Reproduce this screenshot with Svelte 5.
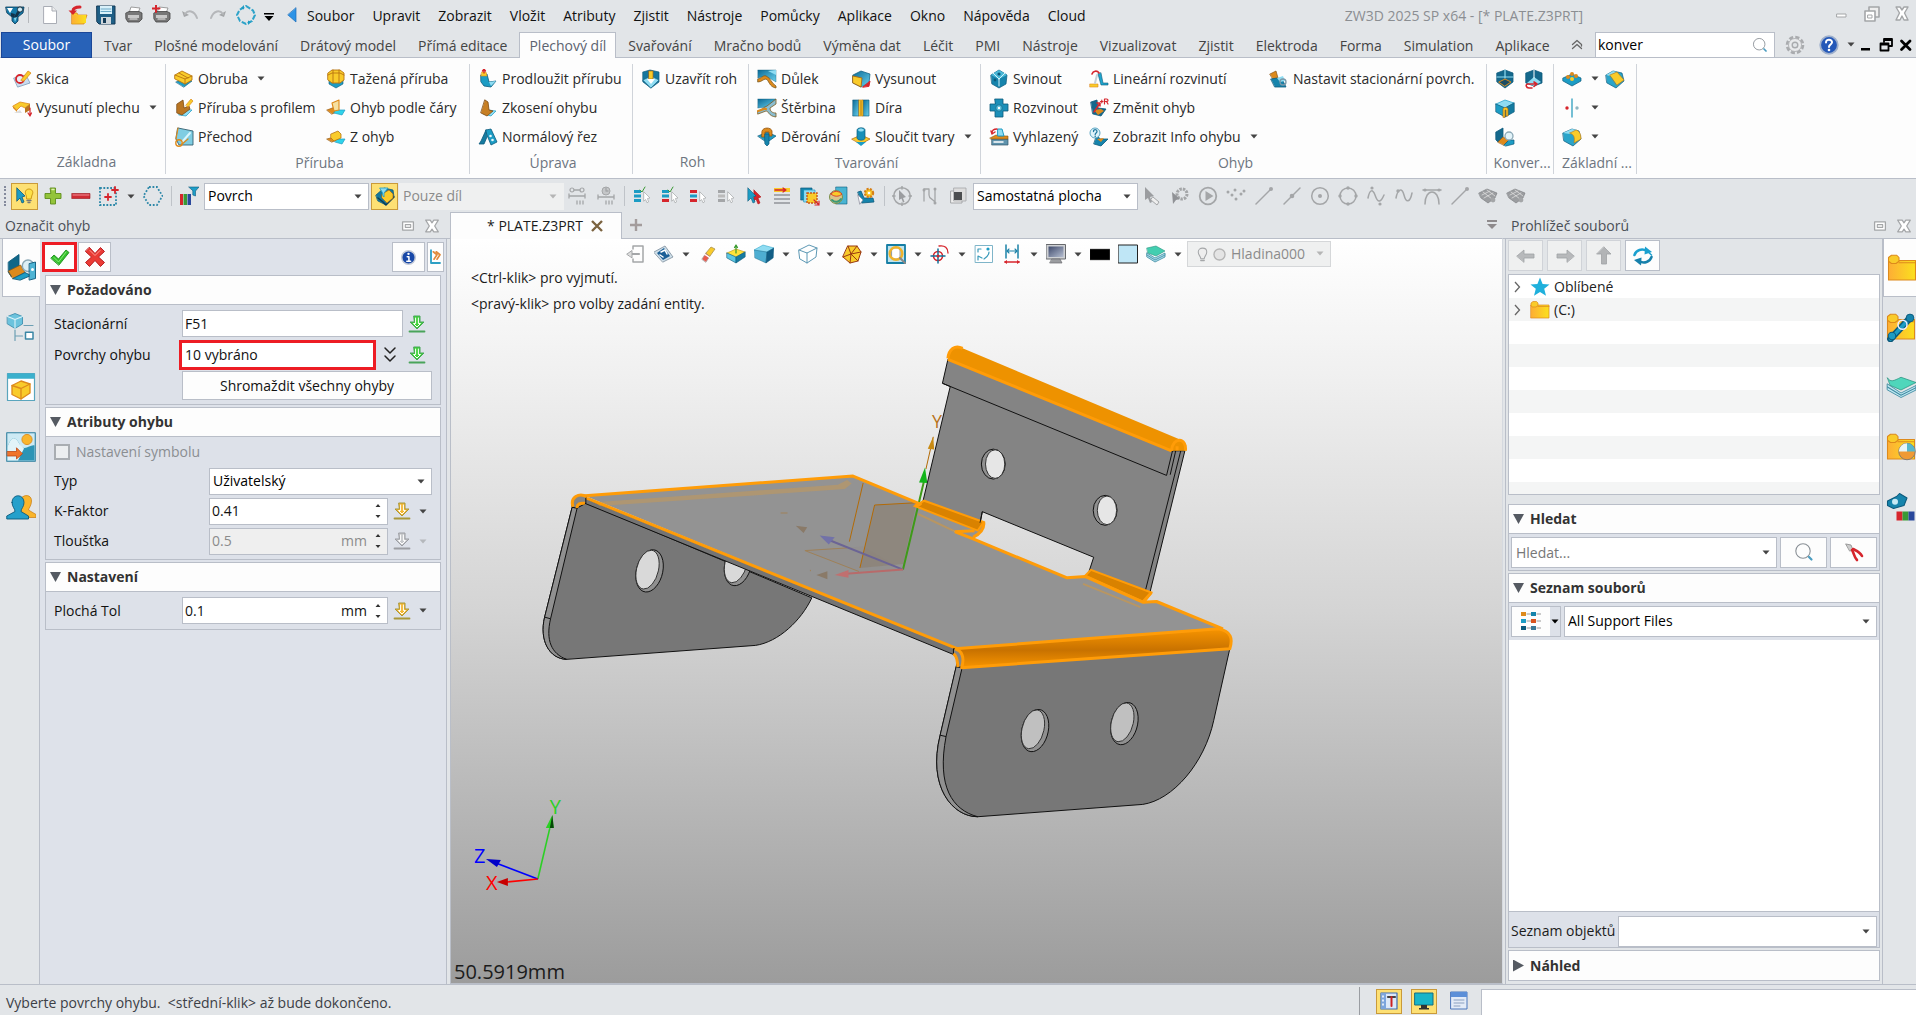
<script>
  const B = '#1c9cc4', D = '#0c5a7c', L = '#8fdcf2', Y = '#f9cb2a', O = '#dd8a1c', G = '#a4a6a8', R = '#d6252c';
  const p = (d, f = 'none', s = 'none', w = 1) =>
    `<path d="${d}" fill="${f}" stroke="${s}" stroke-width="${w}" stroke-linejoin="round" stroke-linecap="round"/>`;
  const c = (x, y, r, f = 'none', s = 'none', w = 1) =>
    `<circle cx="${x}" cy="${y}" r="${r}" fill="${f}" stroke="${s}" stroke-width="${w}"/>`;
  const cursor = (f, s) => p('M12 6L18 12L15.5 12.5L16.5 16L15 16.8L13.6 13.5L12 15Z', f, s, 0.7);
  const bars = (a, b, k) => p('M2 4H9V7H2Z', a) + p('M2 8.5H9V11.5H2Z', b) + p('M2 13H9V16H2Z', k) + cursor('#fff', G);
  const folder = p('M1 5H19V18H1Z', 'url(#gold)', O, 0.7) + p('M1 5.5V3L3 1.5H6.5L8 3V5.5L6 7H3Z', Y, O, 0.7) + p('M8 6.5H19', 'none', O, 0.7);
  const printer = p('M5 8L7 2L16 3L14 8Z', '#fff', '#888', 0.8) + p('M2 8L5 6.5H15L18 8V14L15 17H4L2 14Z', '#777', '#444', 0.8) + p('M4 10H15V13H4Z', '#c8c8c8') + p('M6 14H13', 'none', '#eee', 1.2);
  const download = (f, s) => p('M7 2H13V8H17L10 15L3 8H7Z', f, s, 1) + p('M8.6 4V9.5H6.5L10 13L13.5 9.5H11.4V4', 'none', '#fff', 1) + p('M2.5 17.5H17.5', 'none', s, 1.8);

  const icons = {
    logo: p('M1 2H19L18 8L13 12V16L10 19L7 16V12L2 8Z', '#1579a8', '#093a58', 0.8) + p('M2 3L8 3L5 8Z', '#fff') + p('M16 6L11 14L9 12L13 5Z', '#12334a') + p('M6 8L10 9L9 13L6 11Z', '#12334a') + c(15, 4.5, 2.6, '#cdeaf6', '#1b2a35', 0.9) + p('M9 13L12 12L10 17Z', '#7fd6ee'),
    newdoc: p('M4 1.5H12L16.5 6V18.5H4Z', '#fff', '#a9adb5') + p('M12 1.5V6H16.5', '#eee', '#a9adb5'),
    open: p('M4 8H9L10 10H19L16 19H4Z', Y, O, 0.8) + p('M4 10H18V18H4Z', 'url(#gold)') + p('M12 2C8 2 5 3 5 6', 'none', R, 3) + p('M0.5 5.5H9L5 10Z', R),
    save: p('M1 1H19V19H3L1 17Z', '#1f5f86', '#153b57') + p('M4 1H16V9H4Z', '#d9f1fa') + p('M5 4H15M5 6.5H15', 'none', '#6ba9c7') + p('M5 12H15V19H5Z', '#cfd6db') + p('M7 13H10V18H7Z', '#153b57'),
    print: printer,
    printadd: printer + p('M4 0V7M0.5 3.5H7.5', 'none', R, 2),
    undo: p('M2 6L4 12L9 10Z', G) + p('M5 9C8 5 14 5 17 13', 'none', '#b5b7ba', 2),
    redo: p('M18 6L16 12L11 10Z', G) + p('M15 9C12 5 6 5 3 13', 'none', '#b5b7ba', 2),
    cycle: `<path d="M10 1L17 5.5L19 10L16 16L10 19L4 16L1 10L3.5 5Z" fill="none" stroke="#2ea3c9" stroke-width="2" stroke-dasharray="5 1.6"/>` + p('M8 0V4.5L5 3Z', B) + p('M12 20V15.5L15 17Z', B),
    left: p('M14 3V17L6 10Z', '#2c93e6', '#1a6cb8', 0.7),
    sketch: p('M2 9L14 6L18 14L6 18Z', '#c9dcef', '#7c9ab8', 0.8) + c(8, 10, 4, '#e8eef6', R, 1.8) + p('M9 11L16 2L19 4L12 12Z', Y, O, 0.8),
    extrude: p('M1 8L8 4L18 6L13 10L9 8L5 12Z', Y, O, 0.8) + p('M1 8V10L5 14V12Z', O) + p('M18 6V12L13 15V10Z', '#b9741c') + p('M18 10V18M16 15L18 18L19.5 15', 'none', R, 1.2) + p('M2 15L8 12L10 15Z', '#ddd'),
    flange: p('M2 13L11 9L18 12L10 18Z', B, D, 0.6) + p('M1 6L8 2L18 7V11L11 15L1 10Z', Y, '#b87410', 0.9) + p('M1 6L11 10L18 7M11 10V15M5 4L14 9', 'none', '#b87410', 0.9),
    profile: p('M8 11L18 12L12 18L5 17Z', L, B, 0.7) + p('M3 6L9 2L10 10L15 8L16 11L8 17L3 15Z', '#b97522', '#7e4a10', 0.8) + p('M12 7L17 1L19 3L14 9Z', Y, O, 0.7),
    transition: p('M4 1L19 4V18H5L2 12Z', '#7fcde2', '#35606f', 0.9) + p('M8 15L16 6', 'none', '#d9f6fd', 2) + c(5, 16, 3.2, 'none', O, 1.4) + p('M7 18L14 12M4 1L2 12', 'none', O, 1.2),
    drawn: p('M3 10V15L10 19L17 15V10Z', B, D, 0.6) + p('M2 4L6 1H14L18 4V11L14 14H6L2 11Z', Y, '#b87410', 0.9) + p('M2 6L6 4H14L18 6M7 1V14M13 1V14', 'none', '#b87410', 0.9),
    linebend: p('M1 12L9 9L13 13L6 16Z', O, '#9a5b10', 0.7) + p('M10 12L19 12L16 17L8 15Z', '#2ed3ea', B, 0.7) + p('M6 5L13 2V12L8 13Z', '#f6e0a0', O, 1.1),
    zbend: p('M1 12L8 10L11 13L6 15Z', O, '#9a5b10', 0.7) + p('M11 12L19 12L16 17L9 15Z', '#2ed3ea', B, 0.7) + p('M5 7L12 4L15 7V11L8 14L5 11Z', Y, '#b87410', 0.8),
    extend: p('M3 6L9 5L11 13L18 12L13 18L6 17L3 13Z', B, D, 0.8) + p('M11 13L18 12L13 17Z', L) + p('M3 7H9L8 3H4Z', Y, O, 0.6) + p('M6 4V0M4.5 2L6 0L7.5 2', 'none', R, 1.3),
    taper: p('M10 12L18 13L13 18L6 16Z', L, B, 0.7) + p('M7 2L10 4L11 12L15 13L9 18L3 15Z', '#c77f24', '#7e4a10', 0.8),
    normalcut: p('M8 3L3 14L1 17H6L9 10Z', '#167ba0', D, 0.8) + p('M8 3L13 2L19 15L13 18L9 8Z', B, D, 0.8) + c(12.5, 9, 1.3, '#e6f7fb') + c(14.5, 13, 1.3, '#e6f7fb'),
    corner: p('M2 3L9 1L18 3V13L10 19L2 13Z', '#16779e', D, 0.7) + p('M2 11L10 7L18 11L10 19Z', L, D, 0.6) + p('M8 2H12V10H8Z', Y, '#a76712', 0.7) + p('M6 10L14 10L10 15Z', '#fff'),
    dimple: p('M1 1H19V13L14 10L9 7L1 9Z', 'url(#sky)', D, 0.4) + p('M1 10C5 9 6 6 9 7C14 9 14 14 19 17V19C12 18 12 11 9 10C6 10 5 13 1 13Z', O, '#7c5a20', 0.8) + p('M11 2L19 6V1Z', L),
    louver: p('M1 1H19L10 9L1 10Z', 'url(#sky)', D, 0.4) + p('M1 13C5 12 7 9 10 8L19 1V6L13 10C13 13 15 15 19 15V19C11 18 12 13 9 13L1 16Z', '#8bbdd0', '#7c5a20', 0.8) + p('M1 13C5 12 7 10 9 11', 'none', O, 2.2),
    punch: p('M1 9L10 5L19 9L12 14L8 14Z', B, D, 0.7) + p('M5 4C6 0 14 0 15 4L15 9H12V5H8V10H5Z', O, '#935512', 0.8) + p('M8 7L12 7V17L10 19L8 17Z', '#1684ac', D, 0.7),
    emboss: p('M2 6L10 2L19 5L18 14L10 18L2 14Z', 'url(#sky)', D, 0.7) + p('M2 7L11 9L10 18L2 14Z', Y, '#a76712', 0.9) + p('M12 18L19 12L18 17Z', R, R, 1),
    slot: p('M2 2H8V18H2Z', 'url(#sky)', D, 0.6) + p('M12 2H18V18H12Z', 'url(#sky)', D, 0.6) + p('M8 2H12V18H8Z', Y, '#b87410', 0.6) + p('M10 3V17', 'none', '#b87410', 1),
    merge: p('M1 12L10 8L19 12L10 17Z', Y, '#b87410', 0.8) + p('M5 15L15 15L10 19Z', B) + p('M6 3C6 0 14 0 14 3V11C14 14 6 14 6 11Z', '#178fb8', D, 0.7) + p('M7 3C8 1 12 1 13 3C12 5 8 5 7 3Z', L),
    fold: p('M2 6L10 1L18 6L17 15L10 19L3 15Z', '#1684ac', D, 0.7) + p('M2 6L10 1L18 6L10 10Z', '#4bb9d8') + p('M10 10L4 4M10 10L16 4M10 10V17', 'none', '#d5f3fb', 1) + c(10, 5, 1.6, '#0c5a7c') + c(6, 11, 1.4, '#0c5a7c'),
    unfold: p('M6 1H14V6H19V13H14V19H6V13H1V6H6Z', '#1c8fb8', D, 0.8) + c(10, 10, 3.2, '#57bcd8', D, 0.6) + c(10, 10, 1.2, '#fff'),
    smooth: p('M3 12H19V18H3Z', '#5f93ad', '#33586a', 0.7) + p('M5 15H14', 'none', '#fff', 1.5) + p('M1 11L7 8L10 9L19 9V12H2Z', O, '#875211', 0.6) + p('M9 2H13L15 9H9Z', L, B, 1) + p('M3 6C3 3 5 2 8 2M2 4L3 7L6 5', 'none', R, 1.4),
    linear: p('M1 15H9V18H1Z', Y, O, 0.6) + p('M9 5L12 16H19V14H14L12 4Z', '#1ea5cd', D, 0.6) + p('M8 6L6 14', 'none', '#c7d0d6', 2) + p('M3 5C4 2 8 1 10 4', 'none', R, 1.6),
    change: p('M2 4L8 2L9 10L17 11L12 18L4 16Z', '#15688c', D, 0.8) + p('M5 12L12 11L15 13L9 17Z', O) + p('M5 14L11 5M8 5H11V8', 'none', R, 1.5) + p('M11.5 3.5H14M12.8 2.2V4.8M15.5 6V1H17.5C19.5 1 19.5 3.5 17.5 3.5H15.5M17.5 3.5L19 6', 'none', R, 1.2),
    info: p('M8 8L11 12L19 12L12 19L5 17Z', '#1684ac', D, 0.8) + p('M8 12L15 11L12 15Z', O) + c(6, 6, 5, '#dff3fa', '#5aa6c4', 1) + p('M4.5 4.5C4.5 2 8 2 8 4.5C8 6 6.2 6 6.2 7.5', 'none', '#2379a0', 1.3) + c(6.2, 9.2, 0.8, '#2379a0'),
    stationary: p('M1 5L7 2L9 9L6 13Z', O, '#8a5412', 0.7) + p('M2 10L8 9L14 12L17 18L6 18Z', '#1684ac', D, 0.8) + p('M8 9L14 7L16 12L11 13Z', L) + c(14, 13, 3, 'none', '#7a98a8', 1.3),
    conv1: p('M2 4L10 1L18 4V13L10 19L2 13Z', '#14688c', D, 0.8) + p('M10 1V9M2 8H18', 'none', L, 1.2) + p('M4 13L10 10L16 13L10 17Z', '#1d4d62', O, 1),
    conv2: p('M2 4L10 1L18 4V14L10 17L2 14Z', '#14688c', D, 0.8) + p('M3 14L10 8L17 13L10 17Z', L) + p('M10 1V9', 'none', '#fff', 1) + p('M12 15H4C1 15 2 19 5 19H8M10 13L13 15L10 17.5', 'none', R, 1.6),
    conv3: p('M1 6L10 2L19 5L10 10Z', L, B, 0.7) + p('M1 6L10 10V19L1 14Z', B, D, 0.7) + p('M19 5L10 10V19L19 14Z', '#147a9f', D, 0.7) + p('M8 19V11C8 9 13 9 13 11V18H11V12H10V19Z', Y, '#a76712', 0.7),
    conv4: p('M1 5L8 1V10L3 15L1 13Z', '#14688c', D, 0.8) + p('M3 15L8 10L14 13L9 18Z', O, '#925a14', 0.7) + p('M9 18L14 13H19V17L11 19Z', B, D, 0.7) + c(14, 9, 4, '#e2f3f9', '#8ba8b6', 1.3),
    pattern: p('M1 9L10 5L19 9V12L10 17L1 12Z', B, D, 0.7) + c(6, 8, 2, O) + c(10, 5, 2, O) + c(14, 7, 2, O) + c(10, 10, 2, Y),
    mirror: p('M10 1V19', 'none', '#3aa4c2', 1.4) + c(5, 10, 1.7, R) + c(15, 10, 1.7, '#8fb6c2'),
    fillet: p('M1 6L10 2L17 4L19 12L11 19L2 14Z', '#2aa4c9', D, 0.7) + p('M1 6L10 2L15 3L8 7Z', L) + p('M8 6L14 3C18 4 19 8 19 12L12 16C13 10 12 8 8 6Z', Y, '#b87410', 0.6),
    chamfer: p('M1 6L8 2L17 4L19 12L11 19L2 14Z', '#2aa4c9', D, 0.7) + p('M1 6L8 2L12 3L5 7Z', L) + p('M5 6L12 3L19 11L12 16Z', Y, '#b87410', 0.6),
    pick: p('M2 2L10 10L7 11L9 16L7 17L5 12L2 15Z', B, D, 0.8) + p('M11 9C9 6 11 3 14 3C17 3 19 6 17 9L16 13H12Z', '#fde047', '#c99310', 0.9) + p('M12 14.5H16M13 16.5H15', 'none', '#777', 1.3),
    plus: p('M7.5 2H12.5V7.5H18V12.5H12.5V18H7.5V12.5H2V7.5H7.5Z', '#93c43a', '#5d8c1b', 0.9) + p('M9 3.5H11', 'none', '#dcf0ad', 1.4),
    minus: p('M1 7.5H19V12.5H1Z', '#cf2b34', '#9a1119', 0.6) + p('M2 9H18', 'none', '#f09096', 1),
    dots: `<rect x="1" y="2" width="16" height="17" fill="none" stroke="#2c87a8" stroke-width="1.8" stroke-dasharray="1.8 1.6"/>` + p('M9 8V14M6 11H12M16 1V7M13 4H19', 'none', R, 1.8),
    hexdots: `<path d="M6 1H14L19.5 10L14 19H6L0.5 10Z" fill="none" stroke="#2c87a8" stroke-width="1.8" stroke-dasharray="1.8 1.7"/>`,
    filter: p('M1 8H4V19H1Z', R) + p('M4.5 8H8V19H4.5Z', '#3a9a35') + p('M8.5 8H12V19H8.5Z', '#2a489c') + p('M10 1H20L16.5 5V10L13.8 9V5Z', '#1e9fc9', D, 0.6),
    part: p('M1 9L9 2L18 4L19 11L11 19L3 15Z', '#14789d', D, 0.8) + p('M3 12L8 16L11 19L19 11', 'none', '#083e57', 1.5) + p('M7 8L14 4L18 8V12L12 17L7 12Z', Y, '#a76712', 0.7) + p('M5 2H13L9 7V11L7.5 9V7Z', L, B, 0.8),
    ref1: c(4, 4, 2, 'none', G, 1.2) + c(14, 4, 2, 'none', G, 1.2) + p('M6 4H12M1 10H17M1 8V12M17 8V12M9 15V18M12 15V18M15 15V18', 'none', G, 1.3),
    ref2: c(10, 5, 4, '#c4c6c8', G, 1) + p('M10 2V5H12M2 11H18M2 9V13M18 9V13M10 15V18M13 15V18M16 15V18', 'none', G, 1.3),
    bars1: bars(B, B, B) + p('M8 4L10 6L13 1', 'none', '#3a9a35', 1), bars2: bars(B, B, R) + p('M8 4L10 6L13 1', 'none', '#3a9a35', 1), bars3: bars(R, B, R), bars4: bars(G, '#bbb', G),
    cursors: p('M10 4L17 11L14 12L16 17L14 18L12 13L10 15Z', R, '#a00', 0.5) + p('M4 2L12 10L9 11L11 16L9 17L7 12L4 15Z', B, D, 0.6),
    rows: p('M2 2H18V6H2Z', Y) + p('M3 4H13M11 2L14 4L11 6', 'none', R, 1.3) + p('M2 8H18V10H2ZM2 12H18V14H2ZM2 16H18V18H2Z', '#a5a8ad'),
    boxsel: p('M1 2H12V14H1Z', '#1684ac', D, 0.7) + p('M4 4H15V16H4Z', L, B, 0.7) + `<rect x="7" y="7" width="10" height="10" fill="#f9cb2a" stroke="#c9561a" stroke-width="1.4" stroke-dasharray="2 1"/>` + p('M14 14L19 19M19 15V19H15', 'none', R, 1.2),
    globe: p('M8 1H19V18H8Z', '#49b4d2', D, 0.6) + c(8, 11, 6.5, '#d9c48a', '#7b8f4a', 1) + p('M3 8C6 4 11 5 14 8C11 11 6 11 3 8Z', Y, R, 0.8) + p('M4 14C7 17 11 16 13 13', 'none', '#3a9a76', 2),
    gearbend: p('M2 6L5 5L8 12H17L18 16L6 17Z', '#1684ac', D, 0.8) + `<circle cx="13" cy="7" r="4" fill="#f9cb2a" stroke="#d67f17" stroke-width="2.4" stroke-dasharray="2 1.2"/>` + c(13, 7, 1.3, '#fff') + p('M2 9L7 14L4 18Z', '#fff', '#889', 0.7),
    gcirc: c(10, 10, 8.3, 'none', G, 1.5) + p('M7 4L14 11L11 12L12.5 16L11 16.5L9.5 12.5L7 14Z', '#9b9da0') + p('M10 0V3M10 17V20M0 10H3M17 10H20', 'none', G, 1.5),
    gpath: p('M4 15V3H9V9C9 14 14 12 15 17V4', 'none', G, 1.3) + c(4, 4, 1.5, G) + c(15, 17, 1.5, G) + c(15, 3, 1.5, G),
    gbox: p('M3 5H14V17H3Z', '#eee', G, 1) + p('M6 2H18V15H6Z', '#ddd', G, 0.8) + p('M6 6H14V14H6Z', '#4c4e50'),
    gpick: p('M3 1L12 10L8 11L10 16L8 17L6 12L3 14Z', '#9b9da0') + p('M11 11L17 16L15 19L9 14Z', '#eee', G, 1),
    ggear: `<circle cx="12" cy="8" r="5" fill="none" stroke="#a4a6a8" stroke-width="3" stroke-dasharray="2.4 1"/>` + p('M2 6L10 13L6 14L3 18Z', '#909296'),
    gplay: c(10, 10, 8.3, 'none', G, 1.8) + p('M7.5 5V15L15.5 10Z', G),
    gdots: [[2, 6], [6, 9], [9, 4], [10, 13], [15, 8], [18, 5]].map(([x, y]) => c(x, y, 1.5, G)).join(''),
    gline: p('M2 18L17 3', 'none', G, 1.5) + c(17, 3, 2, G),
    gmid: p('M2 18L18 2', 'none', G, 1.5) + c(10, 10, 2.3, G),
    gcenter: c(10, 10, 8.3, 'none', G, 1.5) + c(10, 10, 2, G),
    gquad: c(10, 10, 8, 'none', G, 1.5) + c(10, 2, 1.7, G) + c(10, 18, 1.7, G) + c(2, 10, 1.7, G) + c(18, 10, 1.7, G),
    gwave1: p('M2 12C4 2 7 4 9 9C12 18 15 16 18 9', 'none', G, 1.5) + c(6, 2, 1.6, G) + c(14, 18, 1.6, G),
    gwave2: p('M2 12C4 2 8 2 10 9C12 17 16 17 18 7', 'none', G, 1.5) + c(4, 5, 1.7, G),
    gtan: p('M3 18C3 2 17 2 17 18M1 4H19', 'none', G, 1.5) + c(3, 4, 1.6, G) + c(17, 4, 1.6, G),
    gmesh: p('M1 7L9 3L19 7L17 12L10 17L3 12Z', '#9b9da0', '#77797c', 0.6) + p('M4 9L12 5M6 12L15 7M5 6L14 13M9 4L17 10', 'none', '#ddd', 0.8) + c(15, 14, 2.4, G),
    exit: p('M7 5V2H17V18H7V15', 'none', G, 1.5) + p('M13 10H5', 'none', G, 2.2) + p('M1 10L6 6.5V13.5Z', '#ddd', G, 1),
    view: p('M0 8L11 2L19 13L9 18Z', '#cfdfe9', '#7a8c9a', 0.8) + p('M3 9L10 4L16 12L9 16Z', '#1b5f96') + p('M7 8L11 6L13 10M6 11L9 13', 'none', '#fff', 1.5),
    eraser: p('M4 15L8 9L12 12L8 18Z', '#e85b4e', '#a8a0a0', 0.8) + p('M8 9L13 3L17 5L12 12Z', Y, '#a89050', 0.8) + p('M7 10.5L11.5 13.5', 'none', '#fff', 1.5),
    normal: p('M1 9L10 5L19 8L10 13Z', '#ffe23a', '#b89210', 0.6) + p('M1 9L10 13V19L1 14Z', '#5cc7e2', D, 0.6) + p('M19 8L10 13V19L19 13Z', '#167ba0', D, 0.6) + p('M10 9V1M8.5 3.5L10 1L11.5 3.5', 'none', '#379a2e', 1.2),
    shaded: p('M0 6L9 1L20 4L13 8Z', L, B, 0.5) + p('M0 6L13 8L12 19L1 14Z', '#4eaed2', D, 0.4) + p('M20 4L13 8L12 19L19 14Z', '#125e86', D, 0.5),
    wire: p('M1 6L11 1L19 4L18 13L9 19L2 15ZM1 6L9 9L19 4M9 9V19', '#fff', '#5d98b4', 1),
    facet: p('M6 2L15 2L19 8L16 17L8 19L1 13Z', Y, '#9a3a10', 1) + p('M6 2L9 10L19 8M9 10L1 13M9 10L16 17M9 10L8 19M15 2L9 10', 'none', '#9a3a10', 1),
    zoomdoc: p('M1 1H19V19H1Z', '#bfe3ee', '#157ea5', 1.8) + p('M6 4H12L14 6V15H6Z', '#fff', '#888', 0.8) + c(10, 9.5, 6.3, 'none', '#efb32c', 2.4) + p('M14 14L19 19', 'none', '#888', 2),
    target: c(8, 12, 4.5, 'none', R, 1.6) + p('M8 5V19M1 12H15', 'none', '#12719a', 1.5) + p('M9 2C15 1 18 4 18 9', 'none', R, 1.3) + c(8, 12, 1.5, R),
    section: p('M1.5 1.5H18.5V18.5H1.5Z', '#fff', '#7fb5c9', 1) + p('M4 5H7M4 5V8M15 8C15 11 13 13 10 15M4 16L4 12L8 14', 'none', '#3b9bbb', 1.2) + c(14, 5, 1.6, B),
    dim: p('M4 1V14M16 1V14', 'none', '#1c82a8', 1.5) + p('M5 7H15M7 5L5 7L7 9M13 5L15 7L13 9', 'none', '#1c82a8', 1.1) + p('M3 18H17', 'none', R, 1.6) + p('M5 16L2 18L5 20M15 16L18 18L15 20', R),
    monitor: p('M0.5 0.5H19.5V15H0.5Z', '#cfd1d4', '#66686c', 1) + p('M2.5 2.5H17.5V13H2.5Z', 'url(#screen)') + p('M6 15H14L16 19H4Z', '#9b9da0', '#6a6c70', 0.7),
    black: p('M0 5H20V16H0Z', '#000', '#777', 0.5),
    swatch: p('M0.5 1H19.5V19H0.5Z', '#bfe6f6', '#222', 1),
    layers: p('M1 9L9 14L19 9V13L9 18L1 13Z', '#a9dbe9', '#3e8ba2', 0.8) + p('M1 11L9 16L19 11', 'none', '#3e8ba2', 0.8) + p('M1 4L10 2L19 7L10 12L2 9Z', '#43ceb0', '#2a9380', 0.6),
    bulb: p('M8 15C8 12 5 11 5 7C5 1 15 1 15 7C15 11 12 12 12 15Z', '#eee', G, 1.2) + p('M8 17H12', 'none', G, 1.6),
    ring: c(10, 10, 6.5, '#e4e4e4', '#b5b5b5', 1.6),
    check: p('M1 11L4 8L8.5 12L16 3L19 5.5L9 18Z', '#35c02c', '#1c8f1c', 0.9) + p('M4 10.5L8.5 15L16 5', 'none', '#8ff07e', 0.9),
    cross: p('M4.5 0.5L10 6.5L15.5 0.5L19.5 4.5L13.5 10L19.5 15.5L15.5 19.5L10 13.5L4.5 19.5L0.5 15.5L6.5 10L0.5 4.5Z', '#ea3b35', '#b01217', 0.9) + p('M5 3.5L10 8.5L15 3.5', 'none', '#ff9d94', 1),
    about: c(10, 10, 8, '#1848a8', '#c4cbd8', 1.8) + c(10, 5.7, 1.4, '#fff') + p('M8.5 9H10.5V14.5M8 14.5H12.5', 'none', '#fff', 1.8),
    expand: p('M4 1V18H16', 'none', '#2d9fc4', 2.4) + p('M7 3L12 7L8 13M11 3L16 7L12 13', 'none', '#e08a3c', 2.2),
    chevs: p('M5 3L10 8L15 3M5 11L10 16L15 11', 'none', '#222', 1.5),
    dlgreen: download('#3fd338', '#49a45a'), dlgold: download('#f2b632', '#a8973a'), dlgray: download('#c5c7ca', '#9b9da2'),
    sidebend: p('M1 6L8 1V10L3 16L1 13Z', '#106788', D, 0.6) + p('M1 12L9 8L12 13L4 17Z', O, '#925a14', 0.5) + p('M4 17L12 13L16 15L9 18Z', B, D, 0.6) + c(14, 8.5, 3.8, '#dceff6', '#8ba8b6', 1) + p('M15 7L19 6V17L15 18Z', '#4eb4d4', D, 0.6) + c(17, 11, 1, '#fff'),
    tree: p('M1 3L6 1L11 3V8L6 11L1 8Z', '#6cc3dd', '#2d84a6', 0.5) + p('M1 3L6 5L11 3M6 5V11', 'none', '#def4fa', 0.7) + p('M12 9H18M6 12V19M6 16H11', 'none', '#6d9fb3', 0.8) + p('M13 13.5H18V18H13Z', '#fff', '#3b87a5', 1),
    view3d: p('M1 1H19V19H1Z', '#fff', '#5aa5bd', 0.8) + p('M1 1H19V4.5H1Z', '#3bb0cc') + p('M4 9L10 6L16 8V14L10 18L4 15Z', Y, O, 0.9) + p('M4 9L10 11L16 8M10 11V18', 'none', O, 0.9),
    scene: p('M0.5 0.5H19.5V19.5H0.5Z', '#cdeaf4', '#2a7c9c', 0.7) + p('M1 10C4 1 7 4 9 8C12 14 16 8 19 9V19H1Z', '#2c94b5') + p('M1 10C4 1 7 4 9 8L12 11L8 19H1Z', '#e2f3f8') + c(14, 5, 3.4, '#f9b52c', O, 0.6) + p('M1 13H7V10.5L11 14.5L7 18V16H1Z', '#f0742a', '#b9430f', 0.5),
    people: p('M9 8C8 2 17 0 17 6C17 9 15 11 15 12L20 15V17H11Z', '#f9b52c', '#c97f17', 0.5) + p('M4 7C4 1 12 1 12 7C12 10 10 11 10 13L15 16V18H0.5V16L6 13C6 11 4 10 4 7Z', '#25a0cb', D, 0.6),
    folder,
    parts: folder + p('M3 18L16 4', 'none', D, 4.5) + p('M3 18L16 4', 'none', B, 2.4) + c(16, 4, 2.6, '#1684ac', D, 0.6) + c(11, 8.5, 3, 'none', '#eef', 1) + c(4, 16, 2.5, B, D, 0.7),
    materials: folder + c(14, 13, 5.5, '#f09a35', '#777', 0.6) + p('M8.5 13A5.5 5.5 0 0 1 14 7.5V13Z', '#e8f5f8') + p('M14 7.5A5.5 5.5 0 0 1 19.5 13H14Z', '#57b8cc'),
    layerbig: p('M1 8L10 14L20 9V12L10 17L1 12Z', '#c2e8f2', '#3e8ba2', 0.6) + p('M1 10L10 15.5L20 10.5', 'none', '#3e8ba2', 0.7) + p('M1 4C3 7 5 6 10 3.5L20 7L10 12L3 9Z', '#4fd6bb', '#2a9380', 0.5),
    props: p('M1 6L7 3L9 1L14 4L12 9L5 11L1 9Z', '#1684ac', D, 0.7) + c(6, 6.5, 2, '#c6e9f4') + p('M7 13H11V19H7Z', R) + p('M11 13H15V19H11Z', '#3a9a35') + p('M15 13H19V19H15Z', '#2a489c'),
    aleft: p('M1 10L8 4V8H18V12H8V16Z', '#b7b9bb', '#a0a2a4', 0.8), aright: p('M19 10L12 4V8H2V12H12V16Z', '#b7b9bb', '#a0a2a4', 0.8), aup: p('M10 1L17 8H12.5V18H7.5V8H3Z', '#b2b4b6', '#a0a2a4', 0.8),
    refresh: p('M1.5 9C3 4 9 2 14 5', 'none', '#1ba0cf', 2.6) + p('M12 0.5L19 6L11.5 8.5Z', '#1ba0cf') + p('M14 5L18.5 9', 'none', '#1ba0cf', 1.5) + p('M18.5 11C17 16 11 18 6 15', 'none', '#1680ab', 2.6) + p('M8 19.5L1 14L8.5 11.5Z', '#1680ab'),
    star: p('M10 0.5L12.6 7L19.5 7.4L14.2 11.8L16 18.7L10 15L4 18.7L5.8 11.8L0.5 7.4L7.4 7Z', '#1fb0dc'),
    search: c(9, 9, 7.2, 'none', '#8a9096', 1.1) + p('M15 15L17.5 17.5', 'none', '#4a9cc0', 2.2),
    pliers: p('M2 2L7 3L9 8L6 9Z', '#ccc', '#888', 0.8) + p('M8 8C10 11 10 15 13 18', 'none', R, 2.6) + p('M9 7C13 9 16 10 18 14', 'none', R, 2.6),
    list: [3, 10, 17].map((y, i) => p(`M0 ${y - 2}H5V${y + 2}H0Z`, [O, B, D][i]) + p(`M6 ${y}H10M16 ${y}H20`, 'none', '#999', 1) + p(`M10 ${y - 2}H15V${y + 2}H10Z`, ['#1684ac', '#d9541f', '#3b7897'][i])).join(''),
    gear: `<circle cx="10" cy="10" r="7.5" fill="#eee" stroke="#a9abae" stroke-width="3.6" stroke-dasharray="3.9 2"/>` + c(10, 10, 6.5, '#e9eaec', '#b3b5b8', 1) + c(10, 10, 2.8, '#e2e5e8', '#a9abae', 1.4),
    help: c(10, 10, 8.8, '#2458b8', '#9fb0cc', 1.8) + p('M7 7.5C7 3.5 13.3 4 13 7.5C12.8 9.5 10 9.7 10 12', 'none', '#fff', 2) + c(10, 15, 1.3, '#fff'),
    up: p('M5.5 9.5L10 5.5L14.5 9.5V11M5.5 13.5L10 9.5L14.5 13.5', 'none', '#666', 1.3),
    wmin: p('M5 10H14V13H5Z', '#fff', G, 1), wmax: p('M7 3H17V13H7Z', '#eee', G, 1.6) + p('M3 7H13V17H3Z', '#fff', G, 1.6) + p('M6 11H10V14H6Z', '#fff', G, 1), wclose: p('M4 3H8L10 6L12 3H16L12.5 9L16 16H12L10 12L8 16H4L7.5 9Z', '#fff', G, 1.4),
    smin: p('M5 13H14V15.5H5Z', '#000'), srest: p('M8 4H16V11H13M8 4V7M8 5H16', 'none', '#000', 1.8) + p('M4.5 8.5H12.5V15.5H4.5ZM4.5 9.5H12.5', 'none', '#000', 1.8), sclose: p('M5.5 6L14 14.5M14 6L5.5 14.5', 'none', '#000', 2.8),
    dock: p('M4 5.5H16V14.5H4Z', '#fff', G, 1.4) + p('M7 8.5H13V11.5H7Z', '#fff', G, 1.2), pclose: p('M3 3.5H8L10 6.5L12 3.5H17L13 10L17 16.5H12L10 13.5L8 16.5H3L7 10Z', '#fff', G, 1.4),
    st1: p('M2 2H18V18H2Z', '#dce9f8', '#3c6cb4', 1.2) + p('M2 2H7V18H2Z', '#7ba5dc') + p('M4 5V6M4 9V10M4 13V14', 'none', '#fff', 1.5) + p('M9 6H16', 'none', '#444', 2.2) + p('M12.5 6V15', 'none', '#c22', 2),
    st2: p('M1 2H19V14H1Z', '#17b5c9', '#146d80', 1) + p('M7 14H13V17H7ZM5 17H15V18.5H5Z', '#333'),
    st3: p('M2 1H18V18H2Z', '#e3ebf7', '#4a76bb', 1) + p('M2 1H18V6H2Z', '#5c8fd8') + p('M5 9H15M5 12H15M5 15H11', 'none', '#8a9fbf', 1)
  };

  const quick = ['newdoc', 'open', 'save', 'print', 'printadd', 'undo', 'redo', 'cycle'];
  const menus = ['Soubor', 'Upravit', 'Zobrazit', 'Vložit', 'Atributy', 'Zjistit', 'Nástroje', 'Pomůcky', 'Aplikace', 'Okno', 'Nápověda', 'Cloud'];
  const tabs = ['Tvar', 'Plošné modelování', 'Drátový model', 'Přímá editace', 'Plechový díl', 'Svařování', 'Mračno bodů', 'Výměna dat', 'Léčit', 'PMI', 'Nástroje', 'Vizualizovat', 'Zjistit', 'Elektroda', 'Forma', 'Simulation', 'Aplikace'];
  const groups = [
    { name: 'Základna', cls: 'g1', cols: [[['sketch', 'Skica'], ['extrude', 'Vysunutí plechu', 1]]] },
    { name: 'Příruba', cls: 'g2', cols: [[['flange', 'Obruba', 1], ['profile', 'Příruba s profilem'], ['transition', 'Přechod']], [['drawn', 'Tažená příruba'], ['linebend', 'Ohyb podle čáry'], ['zbend', 'Z ohyb']]] },
    { name: 'Úprava', cls: 'g3', cols: [[['extend', 'Prodloužit přírubu'], ['taper', 'Zkosení ohybu'], ['normalcut', 'Normálový řez']]] },
    { name: 'Roh', cls: 'g4', cols: [[['corner', 'Uzavřít roh']]] },
    { name: 'Tvarování', cls: 'g5', cols: [[['dimple', 'Důlek'], ['louver', 'Štěrbina'], ['punch', 'Děrování']], [['emboss', 'Vysunout'], ['slot', 'Díra'], ['merge', 'Sloučit tvary', 1]]] },
    { name: 'Ohyb', cls: 'g6', cols: [[['fold', 'Svinout'], ['unfold', 'Rozvinout'], ['smooth', 'Vyhlazený']], [['linear', 'Lineární rozvinutí'], ['change', 'Změnit ohyb'], ['info', 'Zobrazit Info ohybu', 1]], [['stationary', 'Nastavit stacionární povrch.']]] },
    { name: 'Konver...', cls: 'g7', cols: [[['conv1', ''], ['conv3', ''], ['conv4', '']], [['conv2', '']]] },
    { name: 'Základní ...', cls: 'g8', cols: [[['pattern', '', 1], ['mirror', '', 1], ['fillet', '', 1]], [['chamfer', '']]] }
  ];
  const selTools = ['bars1', 'bars2', 'bars3', 'bars4', 'cursors', 'rows', 'boxsel', 'globe', 'gearbend'];
  const snapTools = ['gpick', 'ggear', 'gplay', 'gdots', 'gline', 'gmid', 'gcenter', 'gquad', 'gwave1', 'gwave2', 'gtan', 'gline', 'gmesh', 'gmesh'];
  const viewTools = [['exit'], ['view', 1], ['eraser'], ['normal'], ['shaded', 1], ['wire', 1], ['facet', 1], ['zoomdoc', 1], ['target', 1], ['section'], ['dim', 1], ['monitor', 1], ['black'], ['swatch'], ['layers', 1]];
  const leftSide = ['sidebend', 'tree', 'view3d', 'scene', 'people'];
  const rightSide = ['folder', 'parts', 'layerbig', 'materials', 'props'];

  let query = $state('konver');
</script>

{#snippet icon(name)}
  <svg class="icon" viewBox="0 0 20 20" aria-hidden="true">{@html icons[name]}</svg>
{/snippet}
{#snippet caret()}
  <svg class="caret" viewBox="0 0 8 5" aria-hidden="true"><path d="M0.5 0.5H7.5L4 4.5Z" fill="currentColor" /></svg>
{/snippet}
{#snippet tool(name, drop)}
  <button type="button" class="tool" aria-label={name}>{@render icon(name)}</button>
  {#if drop}<button type="button" class="drop" aria-label="{name} menu">{@render caret()}</button>{/if}
{/snippet}
{#snippet combo(cls, value, label, disabled)}
  <span class="combo {cls}"><select aria-label={label} {disabled}><option>{value}</option></select>{@render caret()}</span>
{/snippet}
{#snippet number(id, value, unit, disabled)}
  <span class="number" class:off={disabled}>
    <input {id} {value} {disabled} />
    <span class="unit">{unit}</span>
    <svg class="spin" viewBox="0 0 6 18" aria-hidden="true"><path d="M0.5 5L3 2L5.5 5ZM0.5 13L3 16L5.5 13Z" fill="currentColor" /></svg>
  </span>
{/snippet}

<svg class="defs" aria-hidden="true">
  <defs>
    <linearGradient id="gold"><stop offset="0" stop-color="#fdae35" /><stop offset="1" stop-color="#fbe01e" /></linearGradient>
    <linearGradient id="sky" x2="1" y2="1"><stop offset="0" stop-color="#0c6a96" /><stop offset="1" stop-color="#6ad2ee" /></linearGradient>
    <linearGradient id="screen" x2="1" y2="1"><stop offset="0" stop-color="#3f4a6c" /><stop offset="1" stop-color="#b4bdd0" /></linearGradient>
    <linearGradient id="bend" x2="0" y2="1"><stop offset="0" stop-color="#f79400" /><stop offset="0.55" stop-color="#c87200" /><stop offset="1" stop-color="#f79400" /></linearGradient>
  </defs>
</svg>

<div class="app">
  <header class="titlebar">
    <button class="tool logo" aria-label="ZW3D">{@render icon('logo')}</button>
    {#each quick as q}{@render tool(q)}{/each}
    <button class="drop more" aria-label="more">
      <svg class="icon" viewBox="0 0 20 20" aria-hidden="true"><path d="M5 8H15V9.500H5ZM5.500 11H14.500L10 16Z" /></svg>
    </button>
    <button class="tool back" aria-label="collapse menu">{@render icon('left')}</button>
    <nav class="menus">{#each menus as m}<button>{m}</button>{/each}</nav>
    <span class="title">ZW3D 2025 SP x64 - [* PLATE.Z3PRT]</span>
    <span class="win">{@render tool('wmin')}{@render tool('wmax')}{@render tool('wclose')}</span>
  </header>

  <div class="tabbar">
    <button class="file">Soubor</button>
    <nav class="tabs">{#each tabs as t}<button class:active={t === 'Plechový díl'}>{t}</button>{/each}</nav>
    <button class="tool collapse" aria-label="collapse ribbon">{@render icon('up')}</button>
    <label class="find"><input aria-label="find command" bind:value={query} />{@render icon('search')}</label>
    <button class="tool big" aria-label="settings">{@render icon('gear')}</button>
    <button class="tool big" aria-label="help">{@render icon('help')}</button>
    <button class="drop slimdrop" aria-label="help menu">{@render caret()}</button>
    <span class="subwin">{@render tool('smin')}{@render tool('srest')}{@render tool('sclose')}</span>
  </div>

  <section class="ribbon">
    {#each groups as g}
      <div class="rgroup {g.cls}">
        <div class="cols">
          {#each g.cols as col}
            <div class="col">
              {#each col as [ic, text, drop]}
                <button class="cmd" aria-label={text || ic}>{@render icon(ic)}{#if text}<span>{text}</span>{/if}{#if drop}{@render caret()}{/if}</button>
              {/each}
            </div>
          {/each}
        </div>
        <div class="rname">{g.name}</div>
      </div>
    {/each}
  </section>

  <section class="toolbar">
    <span class="grip"></span>
    <button class="on" aria-label="pick">{@render icon('pick')}</button>
    {@render tool('plus')}{@render tool('minus')}{@render tool('dots', 1)}{@render tool('hexdots')}
    <span class="sep"></span>
    {@render tool('filter')}
    {@render combo('w165', 'Povrch', 'filter', false)}
    <button class="on" aria-label="part scope">{@render icon('part')}</button>
    {@render combo('w165', 'Pouze díl', 'scope', true)}
    {@render tool('ref1')}{@render tool('ref2')}
    <span class="sep"></span>
    {#each selTools as s}{@render tool(s)}{/each}
    <span class="sep"></span>
    {@render tool('gcirc')}{@render tool('gpath')}{@render tool('gbox')}
    {@render combo('w165', 'Samostatná plocha', 'pick mode', false)}
    {#each snapTools as s}{@render tool(s)}{/each}
  </section>

  <main class="body">
    <aside class="left">
      <div class="ptitle"><span>Označit ohyb</span>{@render tool('dock')}{@render tool('pclose')}</div>
      <div class="pbody">
        <div class="side">{#each leftSide as s, i}<button class:active={i === 0} aria-label={s}>{@render icon(s)}</button>{/each}</div>
        <form class="panel">
          <div class="okrow">
            <button type="button" class="ok mark" aria-label="OK">{@render icon('check')}</button>
            <button type="button" class="ok" aria-label="Cancel">{@render icon('cross')}</button>
            <button type="button" class="ok push" aria-label="Info">{@render icon('about')}</button>
            <button type="button" class="ok slim" aria-label="Expand">{@render icon('expand')}</button>
          </div>
          <fieldset class="pg">
            <h2><i></i>Požadováno</h2>
            <div class="rows tall">
              <div class="row"><label for="st">Stacionární</label><input id="st" value="F51" />{@render tool('dlgreen')}</div>
              <div class="row"><label for="po">Povrchy ohybu</label><input id="po" class="mark" value="10 vybráno" />{@render tool('chevs')}{@render tool('dlgreen')}</div>
              <div class="row"><span class="lead"></span><button type="button" class="wide">Shromaždit všechny ohyby</button></div>
            </div>
          </fieldset>
          <fieldset class="pg">
            <h2><i></i>Atributy ohybu</h2>
            <div class="rows second">
              <div class="row low"><label class="check"><input type="checkbox" disabled />Nastavení symbolu</label></div>
              <div class="row"><label for="ty">Typ</label><span class="combo full"><select id="ty"><option>Uživatelský</option></select>{@render caret()}</span></div>
              <div class="row"><label for="kf">K-Faktor</label>{@render number('kf', '0.41', '', false)}{@render tool('dlgold')}<button type="button" class="drop" aria-label="expression">{@render caret()}</button></div>
              <div class="row"><label for="tl">Tloušťka</label>{@render number('tl', '0.5', 'mm', true)}{@render tool('dlgray')}<button type="button" class="drop dim" aria-label="expression">{@render caret()}</button></div>
            </div>
          </fieldset>
          <fieldset class="pg">
            <h2><i></i>Nastavení</h2>
            <div class="rows tall">
              <div class="row"><label for="pt">Plochá Tol</label>{@render number('pt', '0.1', 'mm', false)}{@render tool('dlgold')}<button type="button" class="drop" aria-label="expression">{@render caret()}</button></div>
            </div>
          </fieldset>
        </form>
      </div>
    </aside>

    <section class="center">
      <div class="doctabs">
        <button class="doc"><span>* PLATE.Z3PRT</span><svg viewBox="0 0 12 12" aria-hidden="true"><path d="M1 1L11 11M11 1L1 11" stroke="#7b6340" stroke-width="2.4" /></svg></button>
        <button class="add" aria-label="new tab"><svg viewBox="0 0 12 12" aria-hidden="true"><path d="M6 0V12M0 6H12" stroke="#a39c9c" stroke-width="2.4" /></svg></button>
        <button class="tablist" aria-label="tab list"><svg viewBox="0 0 12 12" aria-hidden="true"><path d="M1 2H11" stroke="#8e8a8c" stroke-width="2" /><path d="M1 5H11L6 10Z" fill="#8e8a8c" /></svg></button>
      </div>
      <div class="canvas">
        <svg class="model" viewBox="0 0 1053 745" aria-label="PLATE model">
          <g class="part" transform="translate(80 82) scale(0.4592 0.3333)">
            <path class="face dark" d="M90 560L30 890C18 960 40 1015 78 1017L490 975C540 965 590 900 613 832L118 545Z" />
            <path class="face rim" d="M90 560L30 890C18 960 40 1015 78 1017C45 1000 32 960 43 895L101 562Z" />
            <path class="edge" d="M30 890L43 895" />
            {#each [[259, 751], [452, 732]] as [x, y]}
              <ellipse class="face rim" cx={x} cy={y} rx="29" ry="64" transform="rotate(8 {x} {y})" />
              <ellipse class="hole" cx={x - 5} cy={y - 3} rx="24" ry="59" transform="rotate(9 {x} {y})" />
            {/each}
            <path class="face mid" d="M910 115L1398 390H1427L1350 820L1215 765L1228 710L985 573L980 610L855 545L915 197L898 187Z" />
            <path class="edge" d="M898 187L1387 464L1400 390M1395 462L1407 390M1418 390L1340 815" />
            {#each [[1009, 430], [1253, 569]] as [x, y]}
              <ellipse class="face rim" cx={x} cy={y} rx="26" ry="45" />
              <ellipse class="hole light" cx={x + 4} cy={y} rx="21" ry="43" />
            {/each}
            <path class="band" d="M910 115C912 85 925 70 942 82L1415 355C1432 362 1432 378 1428 390H1398Z" />
            <path class="glow" d="M910 115L1398 390M910 112C912 85 925 70 942 82M1398 390C1400 345 1432 350 1428 390M1410 388V376" />
            <path class="face top" d="M118 525L703 468L850 550L925 633L965 655L1170 772L1215 768L1335 845L1365 843L1510 925L930 985Z" />
            <path class="face dim" d="M118 532V548L925 1004L930 985Z" />
            <path class="ghost" d="M140 545L670 492L690 478L700 488L685 505L150 556Z" />
            <path class="plane" d="M750 553L842 546L812 730L718 742Z" />
            <path class="plane veil" d="M598 690L725 678L812 747L716 753Z" />
            <path class="brown" d="M725 487L695 663M750 553L842 546M750 553L718 742" />
            <path class="brown faint" d="M598 690L690 682M598 690L716 753M545 577H560M610 748V752" />
            <path class="green" d="M812 747L858 480" />
            <path class="brown" d="M862 445L878 348" />
            <path d="M860 440L847 485L865 487Z" fill="#12b41a" />
            <path d="M878 348L866 384L880 386Z" fill="#c98a12" />
            <path class="blue" d="M812 747L645 655" /><path d="M630 645L663 650L650 672Z" fill="#7272a8" />
            <path class="red" d="M812 747L680 760" /><path d="M663 763L693 748V772Z" fill="#c07070" />
            <path d="M578 615L603 620L595 637ZM623 763L647 752V776Z" fill="#8a7a68" />
            <path class="top" d="M838 556L975 628L988 604C990 625 980 640 965 655L925 633Z" />
            <path class="band shade" d="M838 556L858 540L988 604L975 630Z" />
            <path class="band shade" d="M1210 765L1222 748L1354 816L1338 845Z" />
            <path class="glow soft" d="M845 580L925 632M1205 790L1330 860" />
            <path class="glow" d="M118 525L703 466L850 550L838 556M925 633L968 630M988 604C990 622 982 638 965 650M925 633L965 655L1170 772L1210 768L1335 845L1354 816M1335 845L1365 843L1510 925M118 530L930 985" />
            <path class="edge" d="M985 573L980 606" />
            <path class="face mid" d="M90 560C85 530 105 515 120 525V548L101 562Z" />
            <path class="face dark" d="M928 1040L893 1245C865 1400 920 1490 975 1490L1335 1453C1400 1440 1470 1330 1490 1200L1525 985L940 1042Z" />
            <path class="face rim" d="M928 1038L893 1245C865 1400 920 1490 975 1490C920 1470 885 1400 906 1248L941 1042Z" />
            <path class="edge" d="M893 1245L906 1249" />
            {#each [[1100, 1231], [1295, 1210]] as [x, y]}
              <ellipse class="face rim" cx={x} cy={y} rx="29" ry="64" transform="rotate(8 {x} {y})" />
              <ellipse class="hole deep" cx={x - 5} cy={y - 3} rx="24" ry="59" transform="rotate(9 {x} {y})" />
            {/each}
            <path class="face mid" d="M922 985V1003C930 1008 930 1025 928 1040H941L950 990Z" />
            <path d="M925 985L1500 925C1528 932 1532 955 1525 985L940 1042C950 1010 940 990 925 985Z" fill="url(#bend)" />
            <path class="glow" d="M925 985L1500 925C1528 932 1532 955 1525 985L940 1042C947 1010 940 990 925 985M92 558C85 530 105 515 122 528M101 562C100 550 108 546 118 548M922 1000C932 1008 930 1025 932 1040" />
          </g>
          <text class="ylabel" x="482" y="189">Y</text>
          <g stroke-width="1.6">
            <path d="M87 641L99 590" stroke="#2bd024" /><path d="M101.500 577L95 590H103Z" fill="#2bd024" /><path d="M101.500 577L99 590H103Z" fill="#064a08" />
            <path d="M87 641L45 625" stroke="#00f" /><path d="M35 621L50 622L46 629Z" fill="#0000c8" />
            <path d="M87 641L56 644" stroke="#f00" /><path d="M46 644L57 640V648Z" fill="#c80000" />
          </g>
          <g class="axes"><text x="99" y="576" fill="#2bd024">Y</text><text x="23" y="625" fill="#00f">Z</text><text x="35" y="652" fill="#f00">X</text></g>
        </svg>
        <div class="viewbar">
          {#each viewTools as [v, d]}{@render tool(v, d)}{/each}
          <span class="level">{@render icon('bulb')}{@render icon('ring')}<select aria-label="layer" disabled><option>Hladina000</option></select>{@render caret()}</span>
        </div>
        <p class="hint">&lt;Ctrl-klik&gt; pro vyjmutí.</p>
        <p class="hint">&lt;pravý-klik&gt; pro volby zadání entity.</p>
        <div class="scale">50.5919mm</div>
      </div>
    </section>

    <aside class="right">
      <div class="ptitle"><span>Prohlížeč souborů</span>{@render tool('dock')}{@render tool('pclose')}</div>
      <div class="pbody">
        <div class="browser">
          <div class="navrow">
            <button class="nav" disabled aria-label="back">{@render icon('aleft')}</button>
            <button class="nav" disabled aria-label="forward">{@render icon('aright')}</button>
            <button class="nav" disabled aria-label="up">{@render icon('aup')}</button>
            <button class="nav live" aria-label="refresh">{@render icon('refresh')}</button>
          </div>
          <ul class="files">
            {#each [['star', 'Oblíbené'], ['folder', '(C:)']] as [ic, text]}
              <li><svg class="arrow" viewBox="0 0 8 12" aria-hidden="true"><path d="M2 1L6.500 6L2 11" fill="none" stroke="#666" stroke-width="1.3" /></svg>{@render icon(ic)}{text}</li>
            {/each}
          </ul>
          <div class="pg">
            <h2><i></i>Hledat</h2>
            <div class="bar">
              <span class="combo flex"><input aria-label="Hledat" placeholder="Hledat..." />{@render caret()}</span>
              <button class="sq" aria-label="search">{@render icon('search')}</button>
              <button class="sq" aria-label="tools">{@render icon('pliers')}</button>
            </div>
          </div>
          <div class="pg fill">
            <h2><i></i>Seznam souborů</h2>
            <div class="bar">
              <button class="listbtn" aria-label="list style"><b>{@render icon('list')}</b>{@render caret()}</button>
              <span class="combo flex"><select aria-label="file type"><option>All Support Files</option></select>{@render caret()}</span>
            </div>
            <div class="listing"></div>
            <div class="bar objects"><label for="ob">Seznam objektů</label><span class="combo flex"><select id="ob"><option></option></select>{@render caret()}</span></div>
          </div>
          <div class="pg closed"><h2><i></i>Náhled</h2></div>
        </div>
        <div class="side rside">{#each rightSide as s, i}<button class:active={i === 0} aria-label={s}>{@render icon(s)}</button>{/each}</div>
      </div>
    </aside>
  </main>

  <footer class="status">
    <span class="msg">Vyberte povrchy ohybu.&nbsp; &lt;střední-klik&gt; až bude dokončeno.</span>
    <span class="stools">
      <button class="on" aria-label="manager">{@render icon('st1')}</button>
      <button class="on" aria-label="screen">{@render icon('st2')}</button>
      <button class="plain" aria-label="output">{@render icon('st3')}</button>
    </span>
    <span class="blank"></span>
  </footer>
</div>

<style>
  :global(body) { margin: 0; background: #e2e5e8; }
  .app { height: 100vh; display: flex; flex-direction: column; overflow: hidden; background: #e2e5e8; color: #1b1b1b; font: 14px/20px "Open Sans", "Noto Sans", sans-serif; }
  .defs { position: absolute; width: 0; height: 0; }
  .app :global(*) { box-sizing: border-box; }
  button, input, select { font: inherit; color: inherit; margin: 0; border: 0; padding: 0; background: none; border-radius: 0; outline: 0; }
  button { display: flex; align-items: center; justify-content: center; white-space: nowrap; }
  select { appearance: none; width: 100%; height: 100%; padding: 0 3px; opacity: 1; }
  input { min-width: 0; }
  .icon { width: 20px; height: 20px; flex: none; display: block; }
  .caret { width: 8px; height: 5px; flex: none; color: #444; }
  .tool { width: 28px; height: 28px; flex: none; }
  .drop { width: 16px; height: 28px; flex: none; }

  .titlebar { height: 30px; flex: none; display: flex; align-items: center; padding-left: 1px; margin-bottom: 2px; }
  .titlebar .logo { border-right: 1px solid #b5b8bc; height: 16px; margin-right: 7px; }
  .more { width: 18px; }
  .menus { display: flex; gap: 18px; padding-left: 1px; color: #111; padding-top: 2px; }
  .title { flex: 1; text-align: right; color: #8b8e92; white-space: nowrap; padding-top: 2px; }
  .win { display: flex; width: 333px; justify-content: flex-end; padding-bottom: 2px; gap: 2px; }

  .tabbar { height: 26px; flex: none; display: flex; align-items: center; padding-left: 1px; color: #444; border-bottom: 1px solid #b9bec8; }
  .file { width: 91px; flex: none; height: 26px; background: #2862b8; border: 1px solid #1b4798; color: #fff; }
  .tabs { display: flex; align-self: stretch; padding-left: 2px; gap: 2px; }
  .tabs button { padding: 0 9px; border: 1px solid transparent; height: 27px; }
  .tabs .active { background: #fdfdfd; border-color: #b9bec8; border-bottom: 0; color: #5c6370; }
  .collapse { margin-left: auto; width: 24px; }
  .find { width: 180px; flex: none; height: 26px; background: #fff; border: 1px solid #b9bec8; display: flex; align-items: center; padding: 0 6px 0 2px; color: #000; margin: 0 3px 0 6px; }
  .find input { flex: 1; }
  .find .icon { width: 16px; height: 16px; }
  .big { width: 34px; }
  .slimdrop { width: 10px; }
  .subwin { display: flex; }
  .subwin .tool { width: 20px; }

  .ribbon { height: 121px; flex: none; display: flex; background: #fdfdfd; border-bottom: 1px solid #b9bec8; color: #2a2a2a; }
  .rgroup { display: flex; flex-direction: column; border-right: 1px solid #d0d4da; margin: 6px 0 4px; padding: 0 4px 0 8px; overflow: hidden; }
  .cols { display: flex; flex: 1; }
  .col { flex: none; padding-right: 10px; }
  .cmd { height: 29px; gap: 4px; justify-content: flex-start; }
  .cmd .caret { margin-left: 5px; }
  .rname { text-align: center; color: #6d7580; height: 24px; line-height: 24px; white-space: nowrap; }
  .g1 { width: 166px; padding-left: 12px; }
  .g2 { width: 304px; } .g2 .col:first-child { width: 152px; }
  .g3 { width: 163px; } .g4 { width: 116px; }
  .g5 { width: 232px; } .g5 .col:first-child { width: 94px; }
  .g6 { width: 506px; } .g6 .col:first-child { width: 100px; } .g6 .col:nth-child(2) { width: 180px; }
  .g7 { width: 67px; } .g7 .col:first-child { width: 29px; }
  .g8 { width: 83px; } .g8 .col:first-child { width: 43px; }
  .g7 .col, .g8 .col { padding-right: 0; }
  .g7 .rname, .g8 .rname { margin: 0 -8px; }

  .toolbar { height: 33px; flex: none; display: flex; align-items: center; padding-top: 1px; }
  .grip { width: 2px; height: 20px; margin: 0 5px 0 4px; border-left: 2px dotted #848a9c; }
  .on { width: 27px; height: 27px; flex: none; background: #fde074; border: 1px solid #c99a3a; margin-right: 1px; }
  .sep { width: 8px; height: 20px; flex: none; display: flex; justify-content: center; }
  .sep::after { content: ""; width: 1px; background: #bfc3c8; }
  .combo { position: relative; display: block; height: 27px; flex: none; background: #fff; border: 1px solid #b9bec8; color: #000; }
  .combo .caret { position: absolute; right: 6px; top: 10px; pointer-events: none; }
  .combo:has(select:disabled) { background: #eff0f0; border-color: #eff0f0; color: #8b8b8b; }
  .combo:has(select:disabled) .caret { color: #b5b5b5; }
  .w165 { width: 165px; margin: 0 0 0 1px; }
  .w165 + .on { margin-left: 2px; margin-right: 0; }

  .body { flex: 1; min-height: 0; display: grid; grid-template-columns: 450px 1fr 413px; }
  .left, .right, .center { display: flex; flex-direction: column; min-width: 0; min-height: 0; }
  .ptitle { height: 26px; flex: none; display: flex; align-items: center; padding: 2px 6px 0 5px; color: #4a4f56; }
  .ptitle span { flex: 1; }
  .ptitle .tool { width: 24px; }
  .ptitle .icon { width: 18px; height: 18px; }
  .pbody { flex: 1; min-height: 0; display: flex; border-top: 1px solid #b9bec8; }
  .side { width: 40px; flex: none; padding-left: 2px; border-right: 1px solid #b9bec8; display: flex; flex-direction: column; }
  .side button { height: 60px; width: 38px; }
  .side .icon { width: 30px; height: 30px; }
  .side .active { height: 58px; background: #fdfdfd; border: 1px solid #b9bec8; border-width: 0 0 1px 1px; }
  .panel { flex: 1; padding: 3px 5px 0; background: #dee2ea; border-right: 1px solid #b9bec8; margin-right: 3px; display: flex; flex-direction: column; gap: 2px; min-width: 0; }
  .okrow { display: flex; height: 30px; gap: 1px; margin: 0 -3px 1px; }
  .ok { width: 33px; background: #fdfdfd; border: 1px solid #b9bec8; height: 30px; }
  .ok.mark { width: 35px; }
  .mark { border: 3px solid #ed1c24; }
  .push { margin: 0 1px 0 auto; }
  .push .icon { width: 17px; height: 17px; }
  .slim { width: 17px; }
  .slim .icon { width: 15px; }
  .pg { margin: 0; padding: 0; border: 1px solid #b9bec8; background: #dde1e9; min-width: 0; }
  .pg h2 { margin: 0; height: 29px; background: #fdfdfd; border-bottom: 1px solid #b9bec8; font-size: 14px; line-height: 28px; font-weight: 700; color: #333; display: flex; align-items: center; gap: 6px; padding-left: 4px; }
  .pg i { width: 11px; height: 10px; background: #555a62; clip-path: polygon(0 0, 100% 0, 50% 100%); }
  .rows { padding: 1px 8px 3px; }
  .row { height: 30px; display: flex; align-items: center; color: #111; }
  .low { height: 28px; }
  .tall { padding-top: 3px; }
  .tall .row { height: 31px; }
  .row label, .lead { width: 128px; flex: none; }
  .second label { width: 155px; }
  .row > input { height: 27px; background: #fff; border: 1px solid #b9bec8; padding: 0 2px; flex: 1; }
  .row > .mark { height: 30px; border: 3px solid #ed1c24; margin-left: -3px; padding: 0 3px; }
  .row .tool { height: 24px; width: 27px; }
  .row .tool:last-child { margin-right: 2px; }
  .wide { flex: 1; height: 29px; background: #fdfdfd; border: 1px solid #b9bec8; }
  .second .check { display: flex; align-items: center; gap: 6px; color: #8b8e92; width: auto; }
  .check input { appearance: none; width: 16px; height: 16px; border: 2px solid #a9adb2; background: #eceef0; }
  .full { flex: 1; }
  .number { flex: 1; height: 27px; background: #fff; border: 1px solid #b9bec8; display: flex; align-items: center; padding: 0 6px 0 2px; min-width: 0; color: #111; }
  .number input { flex: 1; width: 0; }
  .number.off { background: #efefef; color: #8b8b8b; }
  .spin { width: 6px; height: 18px; margin-left: 8px; color: #333; }
  .row .drop { width: 16px; margin-right: 1px; }
  .dim .caret { color: #b5b8bc; }

  .doctabs { height: 26px; flex: none; display: flex; align-items: stretch; }
  .doc { width: 172px; height: 27px; background: #fdfdfd; border: 1px solid #b9bec8; border-bottom: 0; gap: 8px; padding-left: 18px; z-index: 1; }
  .doc svg, .add svg, .tablist svg { width: 12px; height: 12px; }
  .add { width: 28px; } .tablist { width: 22px; margin-left: auto; }
  .canvas { flex: 1; position: relative; border: 1px solid #b9bec8; border-right-color: #d5d9df; background: linear-gradient(#fff, #f0f0f0 18%, #d4d4d4 50%, #9c9c9c); min-height: 0; }
  .model { position: absolute; inset: 0; width: 100%; height: 100%; }
  .viewbar { position: relative; display: flex; align-items: center; justify-content: center; height: 26px; padding-top: 4px; }
  .level { display: flex; align-items: center; position: relative; width: 144px; height: 26px; margin-left: 1px; background: #eff0f0; border: 1px solid #d5d7d9; color: #8b8b8b; padding: 0 16px 0 6px; }
  .level .icon { width: 17px; height: 17px; }
  .level .caret { position: absolute; right: 6px; top: 9px; color: #b5b5b5; }
  .hint { position: relative; margin: 0; padding-left: 20px; height: 26px; line-height: 25px; }
  .scale { position: absolute; left: 3px; bottom: 0; font-size: 20px; line-height: 22px; }
  .axes text, .ylabel { font-size: 20px; font-family: "Open Sans", sans-serif; }
  .ylabel { font-size: 18px; fill: #b8741a; }
  .part path, .part ellipse { vector-effect: non-scaling-stroke; }
  .face { stroke: #111; stroke-width: 1; stroke-linejoin: round; }
  .dark { fill: #777; } .mid { fill: #848484; } .rim { fill: #909090; } .face.dim { fill: #747474; }
  .top { fill: #939393; stroke: none; }
  .edge { fill: none; stroke: #111; stroke-width: 1; }
  .hole { fill: #d9d9d9; stroke: #333; stroke-width: 1; } .hole.light { fill: #e6e6e6; } .hole.deep { fill: #c0c0c0; }
  .band { fill: #ee9200; } .shade { fill: #d98200; stroke: #ff9c08; stroke-width: 2; }
  .glow { fill: none; stroke: #ff9c08; stroke-width: 3; stroke-linejoin: round; } .soft { opacity: 0.35; stroke-width: 2; }
  .ghost { fill: #d79a40; opacity: 0.4; }
  .plane { fill: #8a7f70; opacity: 0.6; } .veil { opacity: 0.12; } .faint { opacity: 0.35; }
  .brown { fill: none; stroke: #b36a05; stroke-width: 1; } .green { stroke: #3f9a18; stroke-width: 2; fill: none; }
  .brown.faint { opacity: 0.4; }
  .blue { stroke: #6b6495; stroke-width: 2; } .red { stroke: #b86a6a; stroke-width: 2; }

  .right .ptitle { padding: 2px 0 0 8px; }
  .browser { flex: 1; min-width: 0; margin-left: 2px; border-left: 1px solid #b9bec8; padding: 1px 2px 3px; display: flex; flex-direction: column; gap: 2px; }
  .navrow { display: flex; gap: 4px; height: 32px; }
  .nav { width: 35px; height: 31px; background: #eff0f0; border: 1px solid #d0d3d8; }
  .live { background: #fdfdfd; border-color: #b9bec8; }
  .files { list-style: none; margin: 0 0 7px; padding: 0; height: 221px; border: 1px solid #b9bec8; background: repeating-linear-gradient(#fff 0 23px, #f4f5f5 23px 46px); color: #222; }
  .files li { height: 23px; display: flex; align-items: center; gap: 4px; padding-left: 4px; }
  .files .arrow { width: 8px; height: 12px; margin-right: 5px; }
  .bar { display: flex; gap: 3px; padding: 3px 2px; height: 36px; align-items: center; }
  .flex { flex: 1; height: 31px; }
  .flex .caret { top: 12px; }
  .flex input { width: 100%; height: 100%; padding: 0 4px; }
  .flex input::placeholder { color: #777; opacity: 1; }
  .sq { width: 47px; height: 31px; background: #fdfdfd; border: 1px solid #b9bec8; }
  .listbtn { width: 50px; height: 31px; border: 1px solid #b9bec8; gap: 0; justify-content: space-between; padding-right: 1px; }
  .listbtn b { width: 38px; align-self: stretch; background: #fdfdfd; display: flex; align-items: center; justify-content: center; }
  .listbtn .caret { color: #000; }
  .fill { flex: 1; display: flex; flex-direction: column; min-height: 0; }
  .listing { flex: 1; background: #fff; border-bottom: 1px solid #b9bec8; margin-top: 1px; }
  .objects { padding: 3px 2px 0; height: 35px; }
  .closed h2 { border: 0; }
  .closed i { clip-path: polygon(0 0, 100% 50%, 0 100%); height: 12px; }
  .rside { width: 34px; padding: 0; border-right: 0; border-left: 1px solid #b9bec8; }
  .rside button { width: 33px; justify-content: flex-start; padding-left: 3px; }

  .status { height: 31px; flex: none; display: flex; align-items: center; border-top: 1px solid #b9bec8; color: #3c4046; }
  .msg { flex: 1; padding: 6px 0 0 6px; }
  .stools { display: flex; align-items: center; gap: 8px; border-left: 1px solid #9a9da2; padding-left: 16px; height: 28px; width: 122px; align-self: flex-end; }
  .stools .on, .plain { width: 26px; height: 25px; }
  .blank { width: 435px; align-self: stretch; margin-top: 4px; background: #fff; border: 1px solid #b9bec8; border-width: 1px 0 0 1px; }
</style>
